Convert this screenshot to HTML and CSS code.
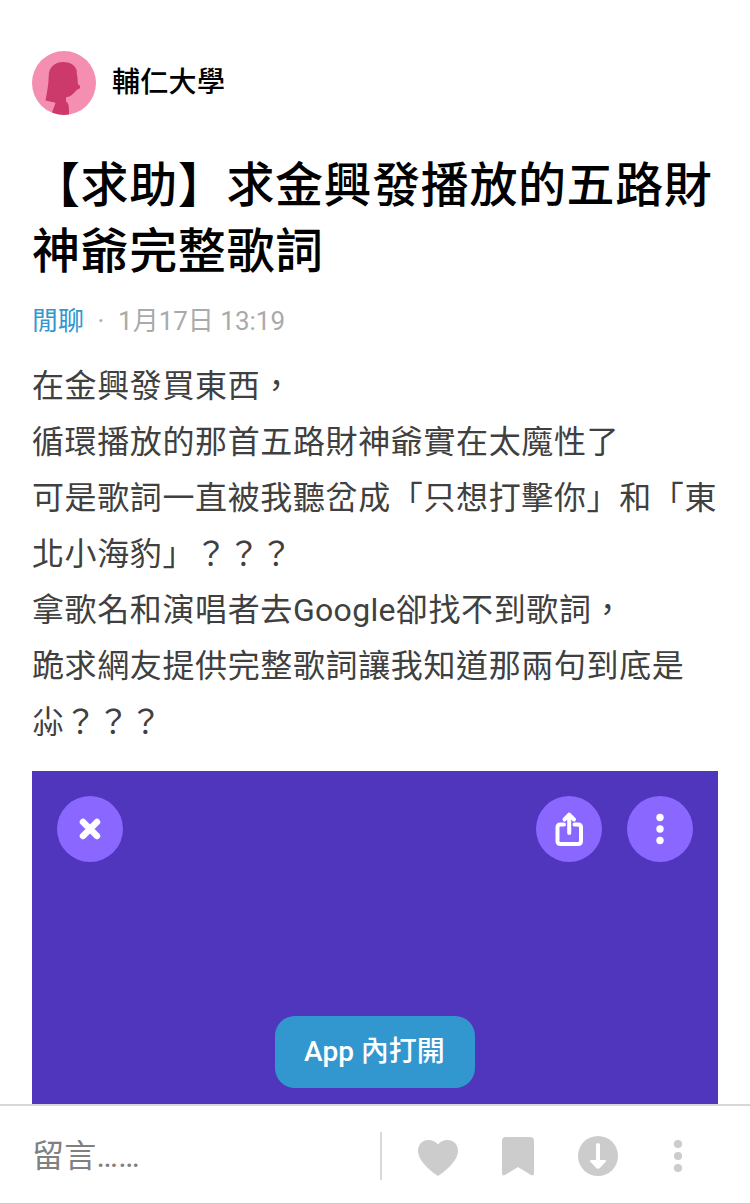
FILE: index.html
```html
<!DOCTYPE html>
<html lang="zh-Hant-TW">
<head>
<meta charset="utf-8">
<title>【求助】求金興發播放的五路財神爺完整歌詞</title>
<link rel="stylesheet" href="styles.css">
</head>
<body>
<div class="screen">
  <main class="post">
    <header class="author">
      <svg class="avatar" viewBox="0 0 64 64" aria-hidden="true">
        <defs><clipPath id="avatar-clip"><circle cx="32" cy="32" r="32"/></clipPath></defs>
        <g clip-path="url(#avatar-clip)">
          <rect width="64" height="64" fill="#f48fb1"/>
          <path fill="#cc3a6b" d="M13.500 49.500C15 41 16.700 33 16.700 25C16.700 15.500 23.500 11 31.200 11C38 11 43.500 14.300 44.800 19.500L44.700 22C45.700 26 45.500 29.500 46 33.500C48.700 34 49 37.500 46.500 38C44.500 38.600 42 42.500 39 44.500C37.500 45.700 35.500 46 34 46.300V50.500C37 52.500 37.200 56 37 64H19.500C20.800 58.500 22.500 55.500 23.500 51.800Z"/>
        </g>
      </svg>
      <span class="school">輔仁大學</span>
    </header>
    <h1 class="title">【求助】求金興發播放的五路財神爺完整歌詞</h1>
    <div class="meta"><a class="forum">閒聊</a><span class="dot">·</span><time>1月17日 13:19</time></div>
    <div class="content">在金興發買東西，<br>循環播放的那首五路財神爺實在太魔性了<br>可是歌詞一直被我聽岔成「只想打擊你」和「東北小海豹」？？？<br>拿歌名和演唱者去<span class="latin">Google</span>卻找不到歌詞，<br>跪求網友提供完整歌詞讓我知道那兩句到底是尛？？？</div>
    <div class="photo">
      <div class="photo-bar">
        <svg class="round" viewBox="0 0 66 66"><circle cx="33" cy="33" r="33"/><path class="cross" d="M26 26 40 40M40 26 26 40"/></svg>
        <svg class="round share" viewBox="0 0 66 66"><circle cx="33" cy="33" r="33"/><path class="line" d="M28 28.500H24.500Q21.500 28.500 21.500 31.500V45Q21.500 48 24.500 48H42Q45 48 45 45V31.500Q45 28.500 42 28.500H38.500M33.200 37V19M28.500 23.500 33.200 18.700 38 23.500"/></svg>
        <svg class="round" viewBox="0 0 66 66"><circle cx="33" cy="33" r="33"/><g fill="#fff"><circle cx="33" cy="21.500" r="3.700"/><circle cx="33" cy="33" r="3.700"/><circle cx="33" cy="44.500" r="3.700"/></g></svg>
      </div>
      <button class="open-app">App 內打開</button>
    </div>
  </main>
  <footer class="toolbar">
    <div class="comment">留言……</div>
    <div class="actions">
      <svg viewBox="0 0 48 48"><path d="M24 44C14 37.500 4 28 4 18.800C4 12.500 8.500 8 14.500 8C18.500 8 21.800 9.500 24 12.500C26.200 9.500 29.500 8 33.500 8C39.500 8 44 12.500 44 18.800C44 28 34 37.500 24 44Z"/></svg>
      <svg viewBox="0 0 48 48"><path d="M12 5H36Q40 5 40 9V41Q40 44.500 37 43L24 35 11 43Q8 44.500 8 41V9Q8 5 12 5Z"/></svg>
      <svg viewBox="0 0 48 48"><circle cx="24" cy="24" r="20"/><path fill="#fff" d="M22 12.700Q22 11 24 11T26 12.700V28H31Q33 28 31.700 29.800L25.500 36.200Q24 37.500 22.500 36.200L16.300 29.800Q15 28 17 28H22Z"/></svg>
      <svg viewBox="0 0 48 48"><circle cx="24" cy="12" r="4.100"/><circle cx="24" cy="24" r="4.100"/><circle cx="24" cy="36" r="4.100"/></svg>
    </div>
  </footer>
</div>
</body>
</html>
```
FILE: styles.css
```css
* {
  box-sizing: border-box;
}

body {
  margin: 0;
  background: #fff;
  font-family: Roboto, "Noto Sans CJK TC", sans-serif;
  text-spacing-trim: space-all;
}

.screen {
  display: flex;
  flex-direction: column;
  width: 750px;
  height: 1204px;
  overflow: hidden;
}

.post {
  display: flex;
  flex: 1;
  flex-direction: column;
  min-height: 0;
  padding: 51px 32px 0;
}

.author {
  display: flex;
  align-items: center;
  gap: 16px;
}

.avatar {
  width: 64px;
  height: 64px;
}

.school {
  font-size: 28px;
  font-weight: 500;
  line-height: 40px;
  letter-spacing: 0.3px;
}

.title {
  margin: 38px 0 0;
  font-size: 48px;
  font-weight: 500;
  line-height: 66px;
  letter-spacing: 0.6px;
}

.meta {
  display: flex;
  margin-top: 18px;
  color: #aaa;
  font-size: 26px;
  line-height: 36px;
}

.forum {
  color: #3397cf;
}

.dot {
  width: 34px;
  text-align: center;
}

.content {
  margin-top: 19px;
  color: #404040;
  font-size: 32px;
  line-height: 56px;
  letter-spacing: 0.62px;
}

.latin {
  letter-spacing: 0.3px;
}

.photo {
  display: flex;
  flex: 1;
  flex-direction: column;
  align-items: center;
  justify-content: space-between;
  margin-top: 21px;
  padding: 25px 25px 16px;
  background: #5035bd;
}

.photo-bar {
  display: flex;
  gap: 25px;
  width: 100%;
}

.round {
  width: 66px;
  height: 66px;
  fill: #8a68ff;
}

.share {
  margin-left: auto;
}

.cross,
.line {
  fill: none;
  stroke: #fff;
  stroke-linecap: round;
  stroke-linejoin: round;
}

.cross {
  stroke-width: 6.5px;
}

.line {
  stroke-width: 4px;
}

.open-app {
  width: 200px;
  height: 72px;
  padding: 0 1px 6px 0;
  border: 0;
  border-radius: 20px;
  background: #3397cf;
  color: #fff;
  font: inherit;
  font-size: 28px;
  font-weight: 500;
}

.toolbar {
  display: flex;
  align-items: center;
  height: 100px;
  padding-top: 3px;
  border-top: 2px solid #d8d8d8;
  border-bottom: 1px solid #ccc;
}

.comment {
  width: 382px;
  height: 48px;
  padding-left: 32px;
  border-right: 2px solid #d8d8d8;
  color: #808080;
  font-size: 32px;
  line-height: 48px;
  letter-spacing: 0.3px;
}

.actions {
  display: flex;
  gap: 32px;
  padding-left: 32px;
}

.actions svg {
  width: 48px;
  height: 48px;
  fill: #ccc;
}
```
